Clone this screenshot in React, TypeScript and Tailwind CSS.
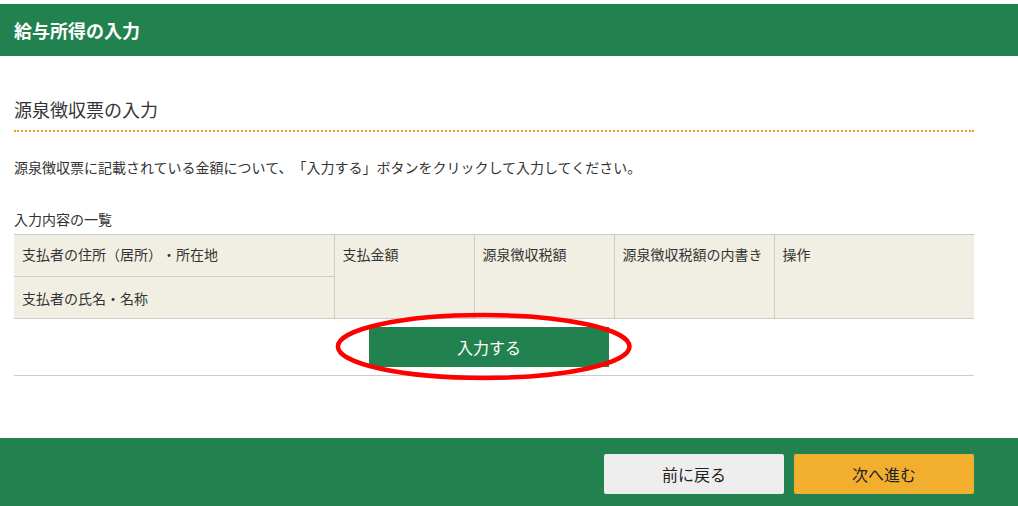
import React from "react";

export default function App() {
  const font = { fontFamily: '"Noto Sans CJK JP", "Noto Sans", sans-serif' };
  return (
    <div className="w-[1018px] h-[506px] bg-white text-[#333] flex flex-col overflow-hidden [text-spacing-trim:space-all]" style={font}>
      <div className="mt-[4px] h-[52px] bg-[#21824f] flex items-center px-[14px]">
        <h1 className="text-white font-bold text-[18px] leading-none">給与所得の入力</h1>
      </div>
      <div className="flex-1 pl-[14px] pr-[44px]">
        <h2 className="mt-[40px] text-[18px] leading-[26px] pb-[8px] border-b-2 border-dotted border-[#eb9a2a]">源泉徴収票の入力</h2>
        <p className="mt-[25px] text-[14px] leading-[20px]">源泉徴収票に記載されている金額について、「入力する」ボタンをクリックして入力してください。</p>
        <p className="mt-[32px] text-[14px] leading-[20px]">入力内容の一覧</p>
        <table className="mt-[5px] w-full border-collapse text-[14px] leading-[20px]">
          <thead>
            <tr className="bg-[#f1efe4]">
              <th className="w-[320px] h-[42px] text-left font-normal align-top pt-[9px] px-[8px] border-t border-b border-r border-[#cccccc]">支払者の住所（居所）・所在地</th>
              <th rowSpan={2} className="w-[140px] text-left font-normal align-top pt-[9px] px-[8px] border-t border-b border-r border-[#cccccc]">支払金額</th>
              <th rowSpan={2} className="w-[140px] text-left font-normal align-top pt-[9px] px-[8px] border-t border-b border-r border-[#cccccc]">源泉徴収税額</th>
              <th rowSpan={2} className="w-[160px] text-left font-normal align-top pt-[9px] px-[8px] border-t border-b border-r border-[#cccccc]">源泉徴収税額の内書き</th>
              <th rowSpan={2} className="text-left font-normal align-top pt-[9px] px-[8px] border-t border-b border-[#cccccc]">操作</th>
            </tr>
            <tr className="bg-[#f1efe4]">
              <th className="h-[42px] text-left font-normal align-middle px-[8px] border-b border-r border-[#cccccc]">支払者の氏名・名称</th>
            </tr>
          </thead>
          <tbody>
            <tr>
              <td colSpan={5} className="pt-[8px] pb-[8px] pl-[355px] border-b border-[#cccccc]">
                <div className="relative w-[240px]">
                  <button className="w-[240px] h-[40px] bg-[#21824f] text-white text-[16px]">入力する</button>
                  <svg className="absolute pointer-events-none" style={{ left: -37, top: -18 }} width="304" height="76" viewBox="0 0 304 76">
                    <ellipse cx="151.7" cy="37.5" rx="145.8" ry="31.4" fill="none" stroke="#ff0000" strokeWidth="4.5" />
                  </svg>
                </div>
              </td>
            </tr>
          </tbody>
        </table>
      </div>
      <div className="h-[68px] bg-[#21824f] flex items-start justify-end gap-[10px] pt-[16px] pr-[44px]">
        <button className="w-[180px] h-[40px] bg-[#eeeeee] rounded-[2px] text-[16px] text-[#222]">前に戻る</button>
        <button className="w-[180px] h-[40px] bg-[#f2ae2f] rounded-[2px] text-[16px] text-[#222]">次へ進む</button>
      </div>
    </div>
  );
}
